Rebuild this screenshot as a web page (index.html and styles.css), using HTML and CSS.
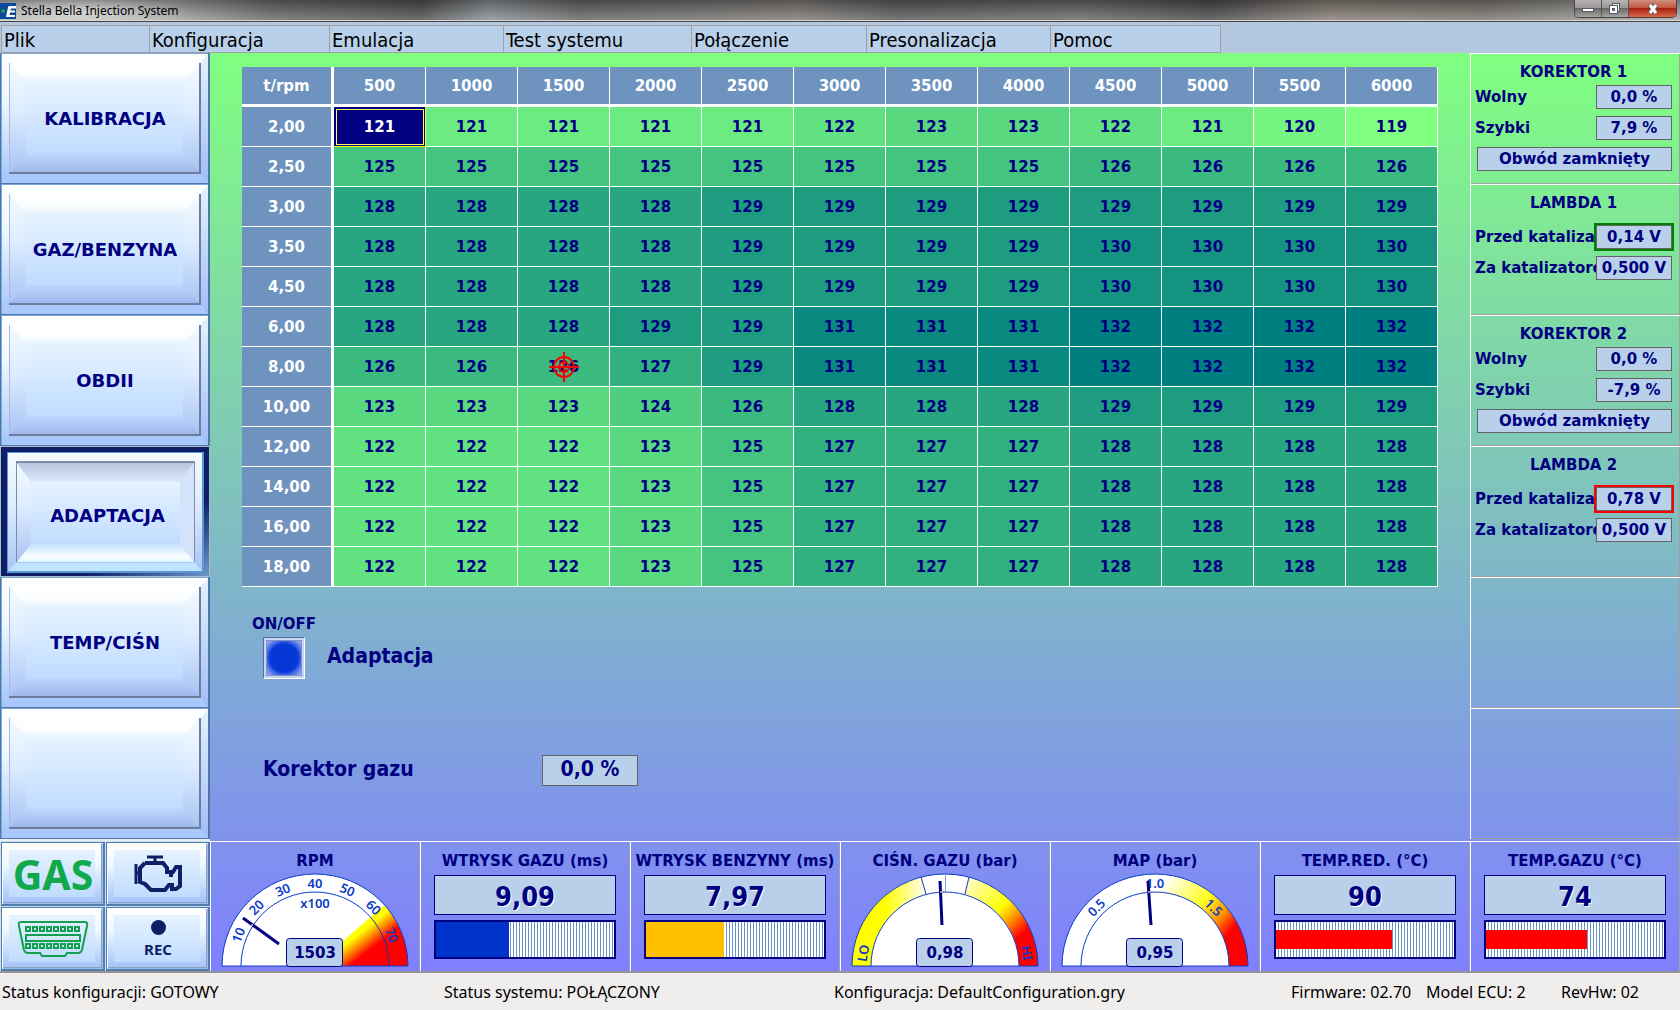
FILE: index.html
```html
<!DOCTYPE html>
<html lang="pl">
<head>
<meta charset="utf-8">
<title>Stella Bella Injection System</title>
<link rel="stylesheet" href="styles.css">
</head>
<body>
<svg class="defs" aria-hidden="true">
  <defs>
    <linearGradient id="face" x1="0" y1="0" x2="0" y2="1"><stop offset="0" stop-color="#e6f3ff"/><stop offset="1" stop-color="#bfdcff"/></linearGradient>
    <linearGradient id="frame" x1="0" y1="0" x2="0" y2="1"><stop offset="0" stop-color="#fff"/><stop offset=".35" stop-color="#eef8ff"/><stop offset="1" stop-color="#a6c4fa"/></linearGradient>
    <linearGradient id="side" x1="0" y1="0" x2="0" y2="1"><stop offset="0" stop-color="#f4fbff"/><stop offset=".45" stop-color="#dcebff"/><stop offset="1" stop-color="#a9c4f4"/></linearGradient>
    <linearGradient id="low" x1="0" y1="0" x2="0" y2="1"><stop offset="0" stop-color="#bcd7fd"/><stop offset="1" stop-color="#9fb8ec"/></linearGradient>
    <linearGradient id="high" x1="0" y1="0" x2="0" y2="1"><stop offset="0" stop-color="#fff"/><stop offset=".6" stop-color="#fcfeff"/><stop offset="1" stop-color="#e8f5ff"/></linearGradient>
    <linearGradient id="dim" x1="0" y1="0" x2="0" y2="1"><stop offset="0" stop-color="#b9c5de"/><stop offset="1" stop-color="#dbe9fc"/></linearGradient>
    <linearGradient id="glow" x1="0" y1="0" x2="0" y2="1"><stop offset="0" stop-color="#c4e0ff"/><stop offset=".7" stop-color="#fafeff"/><stop offset="1" stop-color="#d8f4ff"/></linearGradient>
    <linearGradient id="navy" x1="0" y1="0" x2="1" y2="1"><stop offset="0" stop-color="#0f1f66"/><stop offset=".7" stop-color="#0f1f66"/><stop offset="1" stop-color="#6f97c9"/></linearGradient>
    <linearGradient id="edge" x1="0" y1="0" x2="0" y2="1"><stop offset="0" stop-color="#e4f2ff"/><stop offset="1" stop-color="#9fbef8"/></linearGradient>
    <linearGradient id="hot" gradientUnits="userSpaceOnUse" x1="121" y1="60" x2="140" y2="84"><stop offset="0" stop-color="#fff"/><stop offset=".22" stop-color="#ff0"/><stop offset=".36" stop-color="#ff0"/><stop offset=".65" stop-color="#ff9000"/><stop offset="1" stop-color="#f00"/></linearGradient>
    <linearGradient id="lo" gradientUnits="userSpaceOnUse" x1="34" y1="0" x2="70" y2="0"><stop offset="0" stop-color="#ff0"/><stop offset="1" stop-color="#fffcd8"/></linearGradient>
    <linearGradient id="hi" gradientUnits="userSpaceOnUse" x1="116" y1="4" x2="172" y2="60"><stop offset="0" stop-color="#fffcd8"/><stop offset=".58" stop-color="#ff0"/><stop offset=".78" stop-color="#ff9000"/><stop offset="1" stop-color="#f00"/></linearGradient>
    <linearGradient id="mapband" gradientUnits="userSpaceOnUse" x1="108" y1="2" x2="175" y2="58"><stop offset="0" stop-color="#fff"/><stop offset=".5" stop-color="#ffff20"/><stop offset=".76" stop-color="#ff9000"/><stop offset=".95" stop-color="#f00"/></linearGradient>
  </defs>
  <symbol id="plate" viewBox="0 0 210 131" preserveAspectRatio="none">
    <rect width="210" height="131" fill="#4f78a8"/>
    <rect x="1" width="207" height="130" fill="#7ba8dc"/>
    <rect x="2" y="1" width="206" height="129" fill="url(#frame)"/>
    <path d="M2 130 9 121H200L208 130Z" fill="#a9c8fc"/>
    <path d="M208 1V130L201 121V9Z" fill="url(#edge)"/>
    <rect x="9" y="10" width="192" height="111" fill="#707c9c"/>
    <rect x="9" y="10" width="190" height="109" fill="#a7bbe0"/>
    <rect x="10" y="10" width="189" height="109" fill="url(#side)"/>
    <path d="M10 119 26 101H183L199 119Z" fill="url(#low)"/>
    <path d="M10 10H199L183 29H26Z" fill="url(#high)"/>
    <rect x="26" y="29" width="157" height="72" fill="url(#face)"/>
  </symbol>
  <symbol id="plate-down" viewBox="0 0 210 131" preserveAspectRatio="none">
    <rect width="210" height="131" fill="#a9bccb"/>
    <rect x="1" y="1" width="208" height="129" fill="url(#navy)"/>
    <rect x="7" y="6" width="197" height="121" fill="#5a96d8"/>
    <rect x="8" y="7" width="194" height="118" fill="url(#side)"/>
    <path d="M8 125 16 117H195L202 125Z" fill="#bfe4ff"/>
    <rect x="16" y="15" width="179" height="101" fill="#7f8ba8"/>
    <rect x="17" y="17" width="177" height="99" fill="url(#side)"/>
    <path d="M17 17H194L180 36H31Z" fill="url(#dim)"/>
    <path d="M194 17V116L180 98V36Z" fill="#d3e3fc"/>
    <path d="M17 116 31 98H180L194 116Z" fill="url(#glow)"/>
    <rect x="31" y="36" width="149" height="62" fill="url(#face)"/>
  </symbol>
  <symbol id="plate-small" viewBox="0 0 104 64" preserveAspectRatio="none">
    <rect width="104" height="64" fill="#4f7fae"/>
    <rect x="1" y="1" width="101" height="61" fill="#fff"/>
    <path d="M102 1V62H1Z" fill="#9dbdf0"/>
    <rect x="2" y="3" width="99" height="58" fill="#8f9fbd"/>
    <rect x="2" y="3" width="98" height="57" fill="url(#frame)"/>
    <rect x="8" y="8" width="86" height="47" fill="url(#face)"/>
  </symbol>
</svg>

<header class="titlebar">
  <svg class="logo" width="16" height="16" viewBox="0 0 16 16" aria-hidden="true">
    <rect width="16" height="16" fill="#0a4a98"/>
    <circle cx="3" cy="8" r="2" fill="#18a050"/>
    <path d="M9 3H16V5.500H11L10.500 7.500H15V9.500H10L9.500 12H15V14H6L8 4Z" fill="#fff"/>
  </svg>
  <h1>Stella Bella Injection System</h1>
  <div class="window-buttons">
    <button type="button" aria-label="Minimalizuj"><svg width="14" height="12" viewBox="0 0 14 12"><rect x="1.500" y="5.500" width="11" height="3" fill="#fff" stroke="#555866"/></svg></button>
    <button type="button" aria-label="Przywróć"><svg width="14" height="14" viewBox="0 0 14 14"><rect x="4.500" y="1.500" width="7" height="8" fill="#eee" stroke="#555866"/><rect x="1.500" y="3.500" width="8" height="8" fill="#fff" stroke="#555866"/><rect x="4.500" y="6.500" width="2" height="2" fill="#999" stroke="#555866"/></svg></button>
    <button type="button" class="close" aria-label="Zamknij"><svg width="14" height="12" viewBox="0 0 14 12"><path d="M4 2 10 10M10 2 4 10" stroke="#555866" stroke-width="5"/><path d="M4 2 10 10M10 2 4 10" stroke="#fff" stroke-width="3"/></svg></button>
  </div>
</header>

<nav class="menubar" aria-label="Menu">
  <button type="button">Plik</button><button type="button">Konfiguracja</button><button type="button">Emulacja</button><button type="button">Test systemu</button><button type="button">Połączenie</button><button type="button">Presonalizacja</button><button type="button">Pomoc</button>
</nav>

<div class="workspace">
  <nav class="sections" aria-label="Sekcje">
    <button type="button"><svg><use href="#plate"/></svg><span>KALIBRACJA</span></button>
    <button type="button"><svg><use href="#plate"/></svg><span>GAZ/BENZYNA</span></button>
    <button type="button"><svg><use href="#plate"/></svg><span>OBDII</span></button>
    <button type="button" class="active"><svg><use href="#plate-down"/></svg><span>ADAPTACJA</span></button>
    <button type="button"><svg><use href="#plate"/></svg><span>TEMP/CIŚN</span></button>
    <button type="button" aria-label="Puste"><svg><use href="#plate"/></svg></button>
  </nav>

  <main class="adaptation">
    <table class="map">
      <thead>
        <tr><th>t/rpm</th><th>500</th><th>1000</th><th>1500</th><th>2000</th><th>2500</th><th>3000</th><th>3500</th><th>4000</th><th>4500</th><th>5000</th><th>5500</th><th>6000</th></tr>
      </thead>
      <tbody>
        <tr><th>2,00</th><td class="selected">121</td><td class="v121">121</td><td class="v121">121</td><td class="v121">121</td><td class="v121">121</td><td class="v122">122</td><td class="v123">123</td><td class="v123">123</td><td class="v122">122</td><td class="v121">121</td><td class="v120">120</td><td class="v119">119</td></tr>
        <tr><th>2,50</th><td class="v125">125</td><td class="v125">125</td><td class="v125">125</td><td class="v125">125</td><td class="v125">125</td><td class="v125">125</td><td class="v125">125</td><td class="v125">125</td><td class="v126">126</td><td class="v126">126</td><td class="v126">126</td><td class="v126">126</td></tr>
        <tr><th>3,00</th><td class="v128">128</td><td class="v128">128</td><td class="v128">128</td><td class="v128">128</td><td class="v129">129</td><td class="v129">129</td><td class="v129">129</td><td class="v129">129</td><td class="v129">129</td><td class="v129">129</td><td class="v129">129</td><td class="v129">129</td></tr>
        <tr><th>3,50</th><td class="v128">128</td><td class="v128">128</td><td class="v128">128</td><td class="v128">128</td><td class="v129">129</td><td class="v129">129</td><td class="v129">129</td><td class="v129">129</td><td class="v130">130</td><td class="v130">130</td><td class="v130">130</td><td class="v130">130</td></tr>
        <tr><th>4,50</th><td class="v128">128</td><td class="v128">128</td><td class="v128">128</td><td class="v128">128</td><td class="v129">129</td><td class="v129">129</td><td class="v129">129</td><td class="v129">129</td><td class="v130">130</td><td class="v130">130</td><td class="v130">130</td><td class="v130">130</td></tr>
        <tr><th>6,00</th><td class="v128">128</td><td class="v128">128</td><td class="v128">128</td><td class="v129">129</td><td class="v129">129</td><td class="v131">131</td><td class="v131">131</td><td class="v131">131</td><td class="v132">132</td><td class="v132">132</td><td class="v132">132</td><td class="v132">132</td></tr>
        <tr><th>8,00</th><td class="v126">126</td><td class="v126">126</td><td class="v126 tracked">126<svg class="crosshair" width="30" height="30" viewBox="0 0 30 30" aria-hidden="true"><g fill="none" stroke="#f00" stroke-width="2"><circle cx="15" cy="15" r="10"/><circle cx="15" cy="15" r="5"/><path d="M15 0V30M0 15H30"/></g></svg></td><td class="v127">127</td><td class="v129">129</td><td class="v131">131</td><td class="v131">131</td><td class="v131">131</td><td class="v132">132</td><td class="v132">132</td><td class="v132">132</td><td class="v132">132</td></tr>
        <tr><th>10,00</th><td class="v123">123</td><td class="v123">123</td><td class="v123">123</td><td class="v124">124</td><td class="v126">126</td><td class="v128">128</td><td class="v128">128</td><td class="v128">128</td><td class="v129">129</td><td class="v129">129</td><td class="v129">129</td><td class="v129">129</td></tr>
        <tr><th>12,00</th><td class="v122">122</td><td class="v122">122</td><td class="v122">122</td><td class="v123">123</td><td class="v125">125</td><td class="v127">127</td><td class="v127">127</td><td class="v127">127</td><td class="v128">128</td><td class="v128">128</td><td class="v128">128</td><td class="v128">128</td></tr>
        <tr><th>14,00</th><td class="v122">122</td><td class="v122">122</td><td class="v122">122</td><td class="v123">123</td><td class="v125">125</td><td class="v127">127</td><td class="v127">127</td><td class="v127">127</td><td class="v128">128</td><td class="v128">128</td><td class="v128">128</td><td class="v128">128</td></tr>
        <tr><th>16,00</th><td class="v122">122</td><td class="v122">122</td><td class="v122">122</td><td class="v123">123</td><td class="v125">125</td><td class="v127">127</td><td class="v127">127</td><td class="v127">127</td><td class="v128">128</td><td class="v128">128</td><td class="v128">128</td><td class="v128">128</td></tr>
        <tr><th>18,00</th><td class="v122">122</td><td class="v122">122</td><td class="v122">122</td><td class="v123">123</td><td class="v125">125</td><td class="v127">127</td><td class="v127">127</td><td class="v127">127</td><td class="v128">128</td><td class="v128">128</td><td class="v128">128</td><td class="v128">128</td></tr>
      </tbody>
    </table>
    <div class="controls">
      <div class="switch-caption">ON/OFF</div>
      <div class="switch-row">
        <input type="checkbox" id="adapt" class="switch" checked>
        <label for="adapt">Adaptacja</label>
      </div>
      <div class="corrector-row">
        <label for="corr">Korektor gazu</label>
        <input id="corr" class="box large" type="text" value="0,0 %" readonly>
      </div>
    </div>
  </main>

  <aside class="readings">
    <section class="panel">
      <h2>KOREKTOR 1</h2>
      <div class="row"><span>Wolny</span><output class="box">0,0 %</output></div>
      <div class="row"><span>Szybki</span><output class="box">7,9 %</output></div>
      <div class="box wide">Obwód zamknięty</div>
    </section>
    <section class="panel lambda">
      <h2>LAMBDA 1</h2>
      <div class="row"><span>Przed katalizatorem</span><output class="box lean">0,14 V</output></div>
      <div class="row"><span>Za katalizatorem</span><output class="box">0,500 V</output></div>
    </section>
    <section class="panel">
      <h2>KOREKTOR 2</h2>
      <div class="row"><span>Wolny</span><output class="box">0,0 %</output></div>
      <div class="row"><span>Szybki</span><output class="box">-7,9 %</output></div>
      <div class="box wide">Obwód zamknięty</div>
    </section>
    <section class="panel lambda">
      <h2>LAMBDA 2</h2>
      <div class="row"><span>Przed katalizatorem</span><output class="box rich">0,78 V</output></div>
      <div class="row"><span>Za katalizatorem</span><output class="box">0,500 V</output></div>
    </section>
    <section class="panel"></section>
    <section class="panel"></section>
  </aside>

  <div class="tools">
    <button type="button"><svg class="plate"><use href="#plate-small"/></svg><span class="gas">GAS</span></button>
    <button type="button" aria-label="Silnik"><svg class="plate"><use href="#plate-small"/></svg>
      <svg class="icon" width="50" height="38" viewBox="0 0 50 38" fill="none" stroke="#0f1f66" stroke-width="4"><path d="M14 2H30M22 2V8M3 9V29M3 18H7" stroke-width="3"/><path d="M12 8H30L34 13V17H38V22M12 8 7 13V27L12 29 18 35H32L36 30H39V34H43L47 31V12H43L40 17H36"/></svg>
    </button>
    <button type="button" aria-label="Złącze OBD"><svg class="plate"><use href="#plate-small"/></svg>
      <svg class="icon" width="72" height="38" viewBox="0 0 72 38" fill="none" stroke="#12a04c" stroke-width="2"><path d="M4 2H68Q71 2 70 6L65 30Q64 33 61 33H50L48 36H25L23 33H11Q8 33 7 30L2 6Q1 2 4 2Z"/><path d="M9 15H63V21H9Z"/><path d="M8 9H64M8 26H64" stroke-width="6" stroke-dasharray="6 1"/><path d="M10 9H62M10 26H62" stroke="#d4e8ff" stroke-dasharray="2 5"/></svg>
    </button>
    <button type="button"><svg class="plate"><use href="#plate-small"/></svg><span class="rec"><i></i>REC</span></button>
  </div>

  <section class="gauge"><h2>RPM</h2>
    <svg class="dial" width="188" height="94" viewBox="0 0 188 94">
      <path d="M1 93A93 92 0 0 1 187 93Z" fill="#fff"/>
      <path d="M94 93 163 32A93 92 0 0 1 187 93Z" fill="url(#hot)"/>
      <path d="M1 93A93 92 0 0 1 187 93ZM20 93A74 74 0 0 1 168 93" fill="none" stroke="#0a3cc8"/>
      <g class="ticks"><text transform="rotate(-68 94 93)" x="94" y="15">10</text><text transform="rotate(-45 94 93)" x="94" y="15">20</text><text transform="rotate(-23 94 93)" x="94" y="15">30</text><text x="94" y="15">40</text><text transform="rotate(23 94 93)" x="94" y="15">50</text><text transform="rotate(45 94 93)" x="94" y="15">60</text><text transform="rotate(68 94 93)" x="94" y="15">70</text><text x="94" y="35">x100</text></g>
      <path d="M22 45 58 71" stroke="#000080" stroke-width="3"/><circle cx="31" cy="52" r="1" fill="#ffb090"/>
      <rect x="65.500" y="65.500" width="56" height="28" rx="3" fill="#b9cfea" stroke="#000080"/><text class="num" x="94" y="85">1503</text>
    </svg>
  </section>
  <section class="gauge"><h2>WTRYSK GAZU (ms)</h2><output class="value">9,09</output><div class="bar"><div class="fill blue" style="width:41%"></div></div></section>
  <section class="gauge"><h2>WTRYSK BENZYNY (ms)</h2><output class="value">7,97</output><div class="bar"><div class="fill amber" style="width:44%"></div></div></section>
  <section class="gauge"><h2>CIŚN. GAZU (bar)</h2>
    <svg class="dial" width="188" height="94" viewBox="0 0 188 94">
      <path d="M1 93A93 92 0 0 1 187 93Z" fill="#fff"/>
      <path d="M1 93A93 92 0 0 1 70 4L75 21A74 74 0 0 0 20 93Z" fill="url(#lo)"/>
      <path d="M187 93A93 92 0 0 0 118 4L113 21A74 74 0 0 1 168 93Z" fill="url(#hi)"/>
      <path d="M1 93A93 92 0 0 1 187 93ZM20 93A74 74 0 0 1 168 93M70 4 75 21M118 4 114 21" fill="none" stroke="#0a3cc8"/><path d="M94.500 1V19" stroke="#7f9fd8"/>
      <g class="ticks"><text transform="rotate(-81 94 93)" x="94" y="15">LO</text><text transform="rotate(81 94 93)" x="94" y="15">HI</text></g>
      <path d="M89 8 91 52" stroke="#000080" stroke-width="3"/><circle cx="90" cy="19" r="1" fill="#ffb090"/>
      <rect x="65.500" y="65.500" width="56" height="28" rx="3" fill="#b9cfea" stroke="#000080"/><text class="num" x="94" y="85">0,98</text>
    </svg>
  </section>
  <section class="gauge"><h2>MAP (bar)</h2>
    <svg class="dial" width="188" height="94" viewBox="0 0 188 94">
      <path d="M1 93A93 92 0 0 1 187 93Z" fill="#fff"/>
      <path d="M187 93A93 92 0 0 0 94 1V19A74 74 0 0 1 168 93Z" fill="url(#mapband)"/>
      <path d="M1 93A93 92 0 0 1 187 93ZM20 93A74 74 0 0 1 168 93" fill="none" stroke="#0a3cc8"/>
      <g class="ticks"><text transform="rotate(-45 94 93)" x="94" y="15">0.5</text><text x="94" y="15">1.0</text><text transform="rotate(45 94 93)" x="94" y="15">1.5</text></g>
      <path d="M87 8 90 52" stroke="#000080" stroke-width="3"/><circle cx="88" cy="19" r="1" fill="#ffb090"/>
      <rect x="65.500" y="65.500" width="56" height="28" rx="3" fill="#b9cfea" stroke="#000080"/><text class="num" x="94" y="85">0,95</text>
    </svg>
  </section>
  <section class="gauge"><h2>TEMP.RED. (°C)</h2><output class="value">90</output><div class="bar"><div class="fill red" style="width:65%"></div></div></section>
  <section class="gauge"><h2>TEMP.GAZU (°C)</h2><output class="value">74</output><div class="bar"><div class="fill red" style="width:57%"></div></div></section>
</div>

<footer class="status">
  <span>Status konfiguracji: GOTOWY</span><span>Status systemu: POŁĄCZONY</span><span>Konfiguracja: DefaultConfiguration.gry</span><span>Firmware: 02.70</span><span>Model ECU: 2</span><span>RevHw: 02</span>
</footer>
</body>
</html>
```
FILE: styles.css
```css
* { box-sizing: border-box; }

body {
  margin: 0;
  min-height: 100vh;
  display: flex;
  flex-direction: column;
  background: #f0eded;
  color: #000080;
  font: bold 15px/20px "DejaVu Sans", sans-serif;
}

button { font: inherit; color: inherit; cursor: pointer; }
h1, h2 { margin: 0; font: inherit; }
.defs { position: absolute; width: 0; height: 0; }

/* Window title */
.titlebar {
  display: flex;
  align-items: center;
  gap: 5px;
  height: 22px;
  border-bottom: 1px solid #444;
  box-shadow: inset 0 -1px #d8d8d8;
  background:
    radial-gradient(ellipse 110px 16px at 80px 12px, #ffffff90, #ffffff00),
    linear-gradient(#00000050, #ffffff30),
    linear-gradient(90deg, #b4b4b4 0, #a8a8a8 170px, #6c6c6c 270px, #505050 420px, #8c9296 490px, #686868 580px, #807c78 800px, #5c5c5e 900px, #6c6a68 1080px, #4c4c4e 1210px, #8a8078 1330px, #7c7870 1480px, #aaa 100%);
}
.titlebar h1 { flex: 1; color: #000; font: 12px/16px "Noto Sans", sans-serif; }
.window-buttons {
  display: flex;
  align-self: flex-start;
  height: 18px;
  margin-right: 3px;
  border: 1px solid #444;
  border-top: 0;
  border-radius: 0 0 5px 5px;
  overflow: hidden;
}
.window-buttons button {
  display: flex;
  align-items: center;
  justify-content: center;
  width: 27px;
  padding: 0;
  border: 0;
  border-right: 1px solid #555;
  background: linear-gradient(#b8b4b4, #9c9898 45%, #6c6868 50%, #a8a4a4);
}
.window-buttons .close { width: 47px; border: 0; background: linear-gradient(#d09080, #c05840 45%, #a82010 50%, #d86848); }

/* Menu */
.menubar {
  display: grid;
  grid-template-columns: 148px 180px 174px 188px 175px 184px 171px;
  padding-top: 3px;
  padding-left: 1px;
  background: #b3c8de;
}
.menubar button {
  height: 28px;
  padding: 2px 2px 0;
  border: 1px solid #a0a0a0;
  border-right: 0;
  background: #b9d0ea;
  color: #000;
  font: 20px/24px "DejaVu Sans Condensed", "DejaVu Sans", sans-serif;
  text-align: left;
}
.menubar button:last-child { border-right: 1px solid #a0a0a0; }

/* Main grid: left column and seven equal gauge columns */
.workspace {
  display: grid;
  grid-template-columns: 210px repeat(7, minmax(0, 1fr));
  border-bottom: 2px solid #949494;
  background: linear-gradient(#80ff80, #8080ff);
}
.sections { display: flex; flex-direction: column; background: #e4ecf4; padding-bottom: 2px; }
.sections button, .tools button {
  position: relative;
  display: flex;
  align-items: center;
  justify-content: center;
  padding: 0;
  border: 0;
  background: none;
}
.sections button { height: 131px; font-size: 18px; }
.sections button.active { padding: 8px 0 0 5px; }
.sections svg, .tools .plate { position: absolute; inset: 0; width: 100%; height: 100%; }
.sections span, .tools span, .icon { position: relative; }

.adaptation { grid-column: 2 / 8; padding: 14px 32px 0; }

.map {
  width: 100%;
  table-layout: fixed;
  border-collapse: separate;
  border-spacing: 0;
  text-align: center;
}
.map th, .map td { height: 40px; padding: 0; border: solid #fff; border-width: 0 1px 1px 0; }
.map th { background: #6e93bf; color: #fff; }
.map th:first-child { border-right-width: 3px; }
.map thead th { border-bottom-width: 3px; }
.map .selected { background: #000080; color: #fff; outline: 1px solid #ffff60; outline-offset: -3px; border-color: #ff0; }
.v119 { background: #80ff80; }
.v120 { background: #76f580; }
.v121 { background: #6ceb80; }
.v122 { background: #62e180; }
.v123 { background: #59d880; }
.v124 { background: #4fce80; }
.v125 { background: #45c480; }
.v126 { background: #3bba80; }
.v127 { background: #31b080; }
.v128 { background: #27a680; }
.v129 { background: #1d9c80; }
.v130 { background: #149380; }
.v131 { background: #0a8980; }
.v132 { background: #007f80; }
.tracked { position: relative; }
.crosshair { position: absolute; inset: 0; margin: auto; }

.controls { padding: 27px 10px 0; font: bold 21px/24px "DejaVu Sans Condensed", "DejaVu Sans", sans-serif; }
.switch-caption { font: bold 15px/20px "DejaVu Sans", sans-serif; }
.switch-row { display: flex; align-items: center; gap: 22px; padding: 3px 11px 0; }
.switch-row label, .corrector-row label { padding-bottom: 4px; }
.switch {
  appearance: none;
  width: 42px;
  height: 42px;
  margin: 0;
  border: 1px solid;
  border-color: #50709c #fff #fff #50709c;
  box-shadow: inset 0 0 0 2px #c8d4f4, inset 0 0 0 3px #8090c0;
  background: radial-gradient(circle, #0638d8 14px, #3a62e4 17px, #a8bcf4 24px, #fff 28px);
}
.corrector-row { display: flex; align-items: center; padding: 76px 11px 0; }
.corrector-row label { width: 279px; }

.box {
  height: 24px;
  border: 1px solid #646464;
  background: #b9d0ea;
  color: inherit;
  font: inherit;
  line-height: 22px;
  text-align: center;
  white-space: nowrap;
}
.box.large { width: 96px; height: 31px; padding: 0 0 4px; }
.lean { outline: 2px solid #008000; }
.rich { outline: 2px solid #f00; }

/* Right column */
.readings { display: flex; flex-direction: column; padding-bottom: 2px; }
.panel {
  height: 131px;
  padding: 8px 8px 0 4px;
  border: solid #fff;
  border-width: 1px 0 0 1px;
  box-shadow: inset -1px -1px #a0a0a0;
}
.panel h2 { padding-bottom: 3px; text-align: center; }
.panel.lambda h2 { padding-bottom: 12px; }
.row { display: grid; grid-template-columns: 1fr 76px; padding-bottom: 7px; }
.row span { overflow: hidden; min-width: 0; line-height: 24px; white-space: nowrap; }
.wide { margin-left: 2px; }

/* Bottom row */
.tools { display: grid; grid-template-columns: 1fr 1fr; grid-auto-rows: 64px; gap: 1px; padding: 1px 0 0 1px; background: #d0e0f0; }
.gas { color: #12a84c; font: bold 41px/48px "Noto Sans", sans-serif; }
.rec { display: grid; justify-items: center; gap: 4px; color: #0f1f66; font: bold 15px/20px "Noto Sans", sans-serif; }
.rec i { width: 15px; height: 15px; border-radius: 50%; background: #0f1f66; }

.gauge {
  display: flex;
  flex-direction: column;
  align-items: center;
  height: 130px;
  padding: 9px 14px 0 13px;
  border: solid #fff;
  border-width: 1px 0 0 1px;
  box-shadow: inset -1px 0 #a0a0a0;
}
.gauge h2 { height: 24px; white-space: nowrap; }
.dial { display: block; flex: none; margin-top: -2px; }
.ticks { fill: #0a3cc8; font: 600 13px "Noto Sans", sans-serif; text-anchor: middle; }
.num { fill: #000080; text-anchor: middle; }
.value {
  width: 100%;
  height: 40px;
  border: 1px solid #000080;
  background: #b9d0ea;
  font: bold 27px/42px "DejaVu Sans Condensed", "DejaVu Sans", sans-serif;
  text-align: center;
  text-shadow: 1px 1px #fff;
}
.bar {
  display: flex;
  align-items: center;
  width: 100%;
  height: 39px;
  margin-top: 5px;
  border: 2px solid #000080;
  background: repeating-linear-gradient(90deg, #fff 0 2px, #6a94c4 2px 3px);
}
.fill { height: 100%; }
.blue { background: #0033cc; }
.amber { background: #ffc000; }
.red { height: 19px; background: #f00; }

/* Status bar */
.status {
  flex: 1;
  display: grid;
  grid-template-columns: 442fr 390fr 457fr 135fr 135fr 119fr;
  align-items: center;
  padding: 6px 0 6px 2px;
  color: #000;
  font: 16px/24px "Noto Sans", sans-serif;
  white-space: nowrap;
}
```
